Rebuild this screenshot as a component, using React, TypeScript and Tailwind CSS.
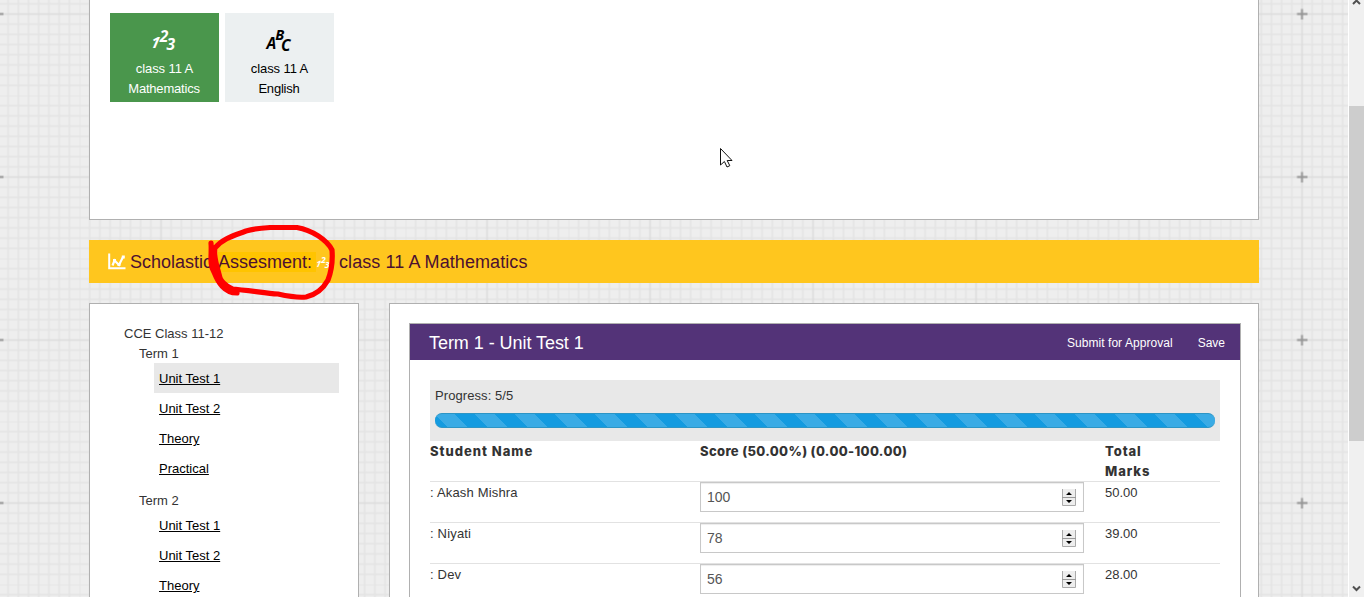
import React from "react";

const GRID = 163;
const minor = Array.from({ length: 15 }, (_, i) => ((i + 1) * GRID) / 16);

function GridBackdrop() {
  return (
    <svg className="absolute inset-0 h-full w-full" aria-hidden="true">
      <defs>
        <pattern id="grid" x="-83.5" y="-67.5" width={GRID} height={GRID} patternUnits="userSpaceOnUse">
          <rect width={GRID} height={GRID} fill="#eeeeee" />
          {minor.map((m) => {
            const p = (m + 81.5) % GRID;
            return (
              <g key={m} fill="#e4e4e4">
                <rect x={p - 0.8} y="0" width="1.6" height={GRID} />
                <rect x="0" y={p - 0.8} width={GRID} height="1.6" />
              </g>
            );
          })}
          <rect x="80.8" y="0" width="1.5" height={GRID} fill="#dcdcdc" />
          <rect x="0" y="80.8" width={GRID} height="1.5" fill="#dcdcdc" />
          <path d="M76.5 81.5h10.5M81.5 76.5v10.5" stroke="#959595" strokeWidth="1.9" />
        </pattern>
      </defs>
      <rect width="100%" height="100%" fill="url(#grid)" />
    </svg>
  );
}

function NumbersIcon({ className }: { className: string }) {
  return (
    <svg viewBox="0 0 26 24" className={`overflow-visible ${className}`} fill="currentColor" fontFamily="Open Sans, sans-serif" fontStyle="italic" fontWeight="700">
      <text x="0" y="20.5" fontSize="15" transform="skewX(-12) translate(3.5 0)">1</text>
      <text x="8.5" y="14.5" fontSize="15">2</text>
      <text x="15" y="22.5" fontSize="15">3</text>
    </svg>
  );
}

function LettersIcon({ className }: { className: string }) {
  return (
    <svg viewBox="0 0 26 24" className={`overflow-visible ${className}`} fill="currentColor" fontFamily="Open Sans, sans-serif" fontStyle="italic" fontWeight="700">
      <text x="0.5" y="21.5" fontSize="15">A</text>
      <text x="9" y="12.5" fontSize="14">B</text>
      <text x="14.5" y="23.5" fontSize="15">C</text>
    </svg>
  );
}

function ChartIcon() {
  return (
    <svg viewBox="0 0 18 17" className="h-[17px] w-[18px]" fill="none" stroke="#fff">
      <path d="M1.2 0.5V15.3H17.5" strokeWidth="2" />
      <path d="M4.5 12.5L6.5 7.5L11 12L15 4" strokeWidth="2.2" />
      <path d="M5 6h3v3h-3zM9.5 10h3v3h-3zM13.8 2.5h3v3h-3z" fill="#fff" stroke="none" />
    </svg>
  );
}

const terms = [
  { name: "Term 1", items: ["Unit Test 1", "Unit Test 2", "Theory", "Practical"] },
  { name: "Term 2", items: ["Unit Test 1", "Unit Test 2", "Theory"] },
];

const students = [
  { name: "Akash Mishra", score: "100", total: "50.00" },
  { name: "Niyati", score: "78", total: "39.00" },
  { name: "Dev", score: "56", total: "28.00" },
];

function Spinner() {
  return (
    <svg viewBox="0 0 14 17" className="h-[17px] w-[14px]">
      <path d="M.5 0V16.5H13.5V0" fill="#eee" stroke="#aaa" />
      <path d="M0 8.5H14" stroke="#999" />
      <path d="M7 3L10 6H4ZM4 11H10L7 14Z" fill="#000" />
    </svg>
  );
}

function SubjectTile({ subject, active, children }: { subject: string; active?: boolean; children: React.ReactNode }) {
  return (
    <div className={`flex h-[89px] w-[109px] flex-col items-center pt-3.5 leading-5 ${active ? "bg-[#4a964c] text-white" : "bg-[#ecf0f1] text-black"}`}>
      {children}
      <span className="mt-[7px] tracking-[-0.1px]">class 11 A</span>
      <span className="-ml-px tracking-[-0.2px]">{subject}</span>
    </div>
  );
}

export default function App() {
  return (
    <div className="relative flex h-[597px] w-[1364px] overflow-hidden font-['Liberation_Sans',Arial,sans-serif] text-[13px] leading-5 text-[#333]">
      <GridBackdrop />
      <main className="relative ml-[89px] flex w-[1170px] shrink-0 flex-col">
        <section className="flex h-[220px] shrink-0 gap-1.5 border border-t-0 border-[#b0b0b0] bg-white pt-[13px] pl-5">
          <SubjectTile subject="Mathematics" active>
            <NumbersIcon className="h-[25px] w-[27px]" />
          </SubjectTile>
          <SubjectTile subject="English">
            <LettersIcon className="h-[25px] w-[27px]" />
          </SubjectTile>
        </section>

        <header className="mt-5 flex h-[43px] shrink-0 items-center bg-[#ffc61e] pl-[19px] text-[18px] text-[#4c1130]">
          <ChartIcon />
          <span className="ml-1 w-[88px] whitespace-nowrap">Scholastic</span>
          <span className="w-[98px] bg-[#ffc400] whitespace-nowrap">Assesment:</span>
          <NumbersIcon className="mr-2 h-4 w-[15px] text-white" />
          <span className="tracking-[0.08px] whitespace-nowrap">class 11 A Mathematics</span>
        </header>

        <div className="mt-5 flex h-[320px] shrink-0 gap-[30px]">
          <aside className="w-[270px] shrink-0 border border-[#b0b0b0] bg-white pt-[19px] pr-[19px] pl-[34px]">
            <p className="pt-px leading-[19px]">CCE Class 11-12</p>
            {terms.map((term, t) => (
              <div key={term.name} className="mb-[7px] pl-[15px]">
                <p className="pt-px leading-[19px]">{term.name}</p>
                <ul className="pl-[15px]">
                  {term.items.map((item, i) => (
                    <li key={item} className={`h-[30px] pt-px pl-[5px] leading-[30px] text-black underline ${t === 0 && i === 0 ? "bg-[#e8e8e8]" : ""}`}>
                      {item}
                    </li>
                  ))}
                </ul>
              </div>
            ))}
          </aside>

          <section className="w-[870px] shrink-0 border border-[#b0b0b0] bg-white px-[19px] pt-[19px]">
            <div className="w-[832px] border border-[#b0b0b0]">
              <div className="flex h-9 items-center bg-[#533378] pt-px pr-[15px] pl-[19px] text-white">
                <h2 className="flex-1 text-[18px] tracking-[-0.05px]">Term 1 - Unit Test 1</h2>
                <span className="text-[12px] tracking-[0.05px]">Submit for Approval</span>
                <span className="ml-[25px] text-[12px]">Save</span>
              </div>
              <div className="p-5 pb-0">
                <div className="h-[61px] bg-[#e8e8e8] p-[5px]">
                  <p className="h-5 pt-px tracking-[0.08px]">Progress: 5/5</p>
                  <div className="mt-2 h-[15px] rounded-[7px] border-y border-[#2d95c5] bg-[#149be0] bg-[linear-gradient(45deg,rgba(255,255,255,.16)_25%,transparent_25%,transparent_50%,rgba(255,255,255,.16)_50%,rgba(255,255,255,.16)_75%,transparent_75%)] bg-[length:40px_40px]" />
                </div>
                <div className="grid h-[41px] grid-cols-[270px_405px_115px] border-b border-[#e2e2e2] font-['Inter',sans-serif] text-[13px] font-extrabold">
                  <span className="tracking-[0.98px]">Student Name</span>
                  <span className="tracking-[0.34px]">Score (50.00%) (0.00-100.00)</span>
                  <span className="tracking-[0.9px]">Total<br />Marks</span>
                </div>
                {students.map((s) => (
                  <div key={s.name} className="grid h-[41px] grid-cols-[270px_384px_136px] border-b border-[#e2e2e2]">
                    <span className="pt-px tracking-[0.18px]">: {s.name}</span>
                    <div className="flex h-[30px] items-center justify-between border border-[#c8c8c8] pr-[7px] pl-1.5 text-[14px] text-[#555] shadow-[inset_0_1px_1px_rgba(0,0,0,.075)]">
                      <span>{s.score}</span>
                      <Spinner />
                    </div>
                    <span className="pt-px pl-[21px]">{s.total}</span>
                  </div>
                ))}
              </div>
            </div>
          </section>
        </div>
      </main>

      <div className="relative ml-auto flex w-4 flex-col border-l border-white bg-[#f0f0f0]">
        <svg viewBox="0 0 15 106" className="h-[106px] w-[15px]"><path d="M4 4L7.5 .5L11 4" fill="none" stroke="#505050" strokeWidth="2" /></svg>
        <div className="h-[335px] bg-[#cdcdcd]" />
        <svg viewBox="0 0 15 12" className="mt-auto h-3 w-[15px]"><path d="M4 1.5L7.5 5L11 1.5" fill="none" stroke="#505050" strokeWidth="2" /></svg>
      </div>

      <svg className="pointer-events-none absolute inset-0 h-full w-full" fill="none">
        <path d="M720.5 148.5V165L724.4 161.5L727 167L729.8 165.7L727.2 160.5H732Z" fill="#fff" stroke="#111" />
        <path d="M211 243C212 254 209 264 214 272C218 282 224 293 237 293C234 287 224 288 220 278C217 266 213 256 215 248C223 238 236 235 246 231C253 229 262 228 270 227.5H297C312 230 327 240 332 250C333 262 331 272 328 280C323 289 315 295 306 297C297 298 287 296 278 294C264 293 248 290 231 289" stroke="#ff0000" strokeWidth="5.2" strokeLinejoin="round" strokeLinecap="round" />
      </svg>
    </div>
  );
}
